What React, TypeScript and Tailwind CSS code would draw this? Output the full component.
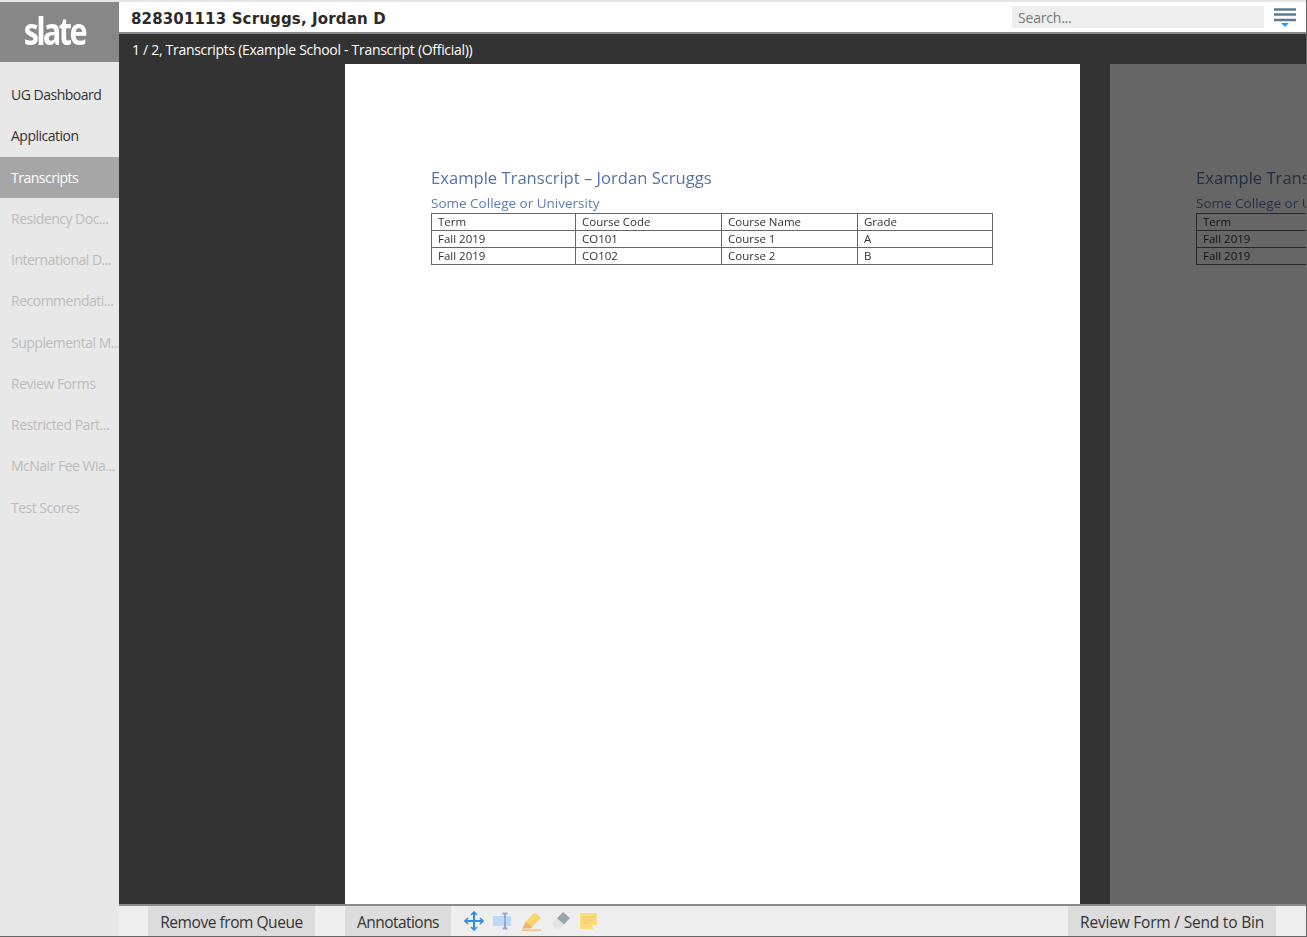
import React from 'react';

const navItems = [
  { label: 'UG Dashboard', state: 'normal' },
  { label: 'Application', state: 'normal' },
  { label: 'Transcripts', state: 'active' },
  { label: 'Residency Doc...', state: 'disabled' },
  { label: 'International D...', state: 'disabled' },
  { label: 'Recommendati...', state: 'disabled' },
  { label: 'Supplemental M...', state: 'disabled' },
  { label: 'Review Forms', state: 'disabled' },
  { label: 'Restricted Part...', state: 'disabled' },
  { label: 'McNair Fee Wia...', state: 'disabled' },
  { label: 'Test Scores', state: 'disabled' },
];

const rows = [
  ['Term', 'Course Code', 'Course Name', 'Grade'],
  ['Fall 2019', 'CO101', 'Course 1', 'A'],
  ['Fall 2019', 'CO102', 'Course 2', 'B'],
];

const colWidths = ['w-[144px]', 'w-[146px]', 'w-[136px]', 'w-[135px]'];

const TranscriptPage = () => (
  <div className="w-[735px] h-full shrink-0 bg-white pl-[86px] pt-[102px] font-['Open_Sans',sans-serif]">
    <h1 className="text-[16.6px] leading-[24px] text-[#5672a8] blur-[0.4px] whitespace-nowrap">Example Transcript – Jordan Scruggs</h1>
    <h2 className="text-[13.5px] leading-[18px] mt-[4px] text-[#5a7cb8] blur-[0.4px] whitespace-nowrap">Some College or University</h2>
    <table className="mt-[1px] w-[561px] table-fixed border-collapse text-[11.5px] text-[#333] blur-[0.3px]">
      <tbody>
        {rows.map((row, i) => (
          <tr key={i} className="h-[17px]">
            {row.map((cell, j) => (
              <td key={j} className={`${colWidths[j]} border border-[#666] px-[6px] pt-0 pb-[1px] leading-[14px] whitespace-nowrap`}>
                {cell}
              </td>
            ))}
          </tr>
        ))}
      </tbody>
    </table>
  </div>
);

const MoveIcon = () => (
  <svg width="20" height="20" viewBox="0 0 20 20" fill="none" stroke="#2f8fe0" strokeWidth="2">
    <path d="M10 1v18M1 10h18" />
    <path d="M7 4l3-3 3 3M7 16l3 3 3-3M4 7l-3 3 3 3M16 7l3 3-3 3" strokeWidth="1.6" />
  </svg>
);

const SelectIcon = () => (
  <svg width="20" height="20" viewBox="0 0 20 20" fill="none">
    <rect x="0" y="5" width="18" height="10" fill="#bcd9f5" />
    <path d="M12 3v14M9.5 2.5h5M9.5 17.5h5" stroke="#9aa3d6" strokeWidth="2" />
  </svg>
);

const HighlighterIcon = () => (
  <svg width="20" height="20" viewBox="0 0 20 20">
    <path d="M12.5 1.5L19 7l-9 9H4.5L3.5 11z" fill="#f7d56e" />
    <path d="M3.5 11l6.5 5-1 1.5H0.5z" fill="#f2b36a" />
    <rect x="0" y="18.5" width="19" height="1.2" fill="#f2b36a" />
  </svg>
);

const EraserIcon = () => (
  <svg width="20" height="20" viewBox="0 0 20 20">
    <path d="M12 1l7 6-6 6.5-7-6z" fill="#99a5aa" />
    <path d="M6 7.5l7 6-3.5 4H4.5L0 13z" fill="#e2e5e6" />
  </svg>
);

const NoteIcon = () => (
  <svg width="18" height="18" viewBox="0 0 18 18">
    <path d="M0 1h17v12l-4 4H0z" fill="#fbdc7c" />
    <path d="M3 5h11M3 8h11M3 11h6" stroke="#eec566" strokeWidth="1" />
    <path d="M13 17v-4h4z" fill="#fdf7e6" />
  </svg>
);

const App = () => {
  return (
    <div className="w-[1307px] h-[937px] flex flex-col overflow-hidden bg-white font-['Open_Sans',sans-serif] border-r border-[#666]">
      <div className="h-[2px] shrink-0 bg-[#e6e6e6]" />
      <div className="flex flex-1 min-h-0">
        {/* Sidebar */}
        <aside className="w-[119px] shrink-0 bg-[#e8e8e8] flex flex-col">
          <div className="h-[60px] bg-[#878787] flex items-center justify-center pr-[11px]">
            <span className="text-white text-[37px] font-bold leading-none tracking-[-3px] scale-x-[0.82] pb-[4px] font-['Noto_Sans',sans-serif]">slate</span>
          </div>
          <nav className="pt-[12px] text-[14px] tracking-[-0.5px]">
            {navItems.map((item) => (
              <div
                key={item.label}
                className={`h-[41.25px] flex items-center pl-[11px] whitespace-nowrap overflow-hidden ${
                  item.state === 'active'
                    ? 'bg-[#a6a6a6] text-white'
                    : item.state === 'disabled'
                      ? 'text-[#bcbcbc]'
                      : 'text-[#333]'
                }`}
              >
                {item.label}
              </div>
            ))}
          </nav>
        </aside>

        {/* Main */}
        <main className="flex-1 min-w-0 flex flex-col">
          <header className="h-[30px] shrink-0 bg-white flex items-center pl-[12px] pr-[10px]">
            <div className="flex-1 pt-[5px] text-[15px] tracking-[0.15px] font-bold text-[#2b2b2b] font-['DejaVu_Sans',sans-serif] whitespace-nowrap">828301113 Scruggs, Jordan D</div>
            <div className="w-[252px] h-[22px] bg-[#eeeeee] flex items-center px-[6px] text-[14px] tracking-[-0.2px] text-[#777]">Search...</div>
            <svg width="22" height="22" viewBox="0 0 22 22" className="ml-[10px] mt-[2px]">
              <path d="M0 2.5h22M0 7.5h22M0 13h22" stroke="#5e7c8f" strokeWidth="2.6" />
              <path d="M7 16h8l-4 4z" fill="#2a9df4" />
            </svg>
          </header>
          <div className="h-[2px] shrink-0 bg-[#8a8a8a]" />
          <div className="h-[30px] shrink-0 bg-[#333333] flex items-center pl-[13px] text-[14px] tracking-[-0.3px] text-white whitespace-nowrap">
            1 / 2, Transcripts (Example School - Transcript (Official))
          </div>

          {/* Document viewer */}
          <div className="flex-1 min-h-0 bg-[#333333] flex gap-[30px] pl-[226px] overflow-hidden">
            <TranscriptPage />
            <div className="relative h-full shrink-0">
              <TranscriptPage />
              <div className="absolute inset-0 bg-black/60" />
            </div>
          </div>

          {/* Bottom toolbar */}
          <div className="h-[2px] shrink-0 bg-[#8a8a8a]" />
          <footer className="h-[30px] shrink-0 bg-[#eeeeee] flex items-stretch text-[15.5px] text-[#333]">
            <div className="ml-[29px] w-[167px] pt-[3px] bg-[#dcdcdc] flex items-center justify-center tracking-[-0.45px] whitespace-nowrap">Remove from Queue</div>
            <div className="ml-[30px] w-[106px] pt-[3px] bg-[#dcdcdc] flex items-center justify-center tracking-[-0.55px] whitespace-nowrap">Annotations</div>
            <div className="ml-[13px] flex items-center gap-[9px]">
              <MoveIcon />
              <SelectIcon />
              <HighlighterIcon />
              <EraserIcon />
              <NoteIcon />
            </div>
            <div className="ml-auto mr-[30px] w-[208px] pt-[3px] bg-[#dcdcdc] flex items-center justify-center tracking-[-0.2px] whitespace-nowrap">Review Form / Send to Bin</div>
          </footer>
        </main>
      </div>
      <div className="h-px shrink-0 bg-[#666]" />
    </div>
  );
};

export default App;
